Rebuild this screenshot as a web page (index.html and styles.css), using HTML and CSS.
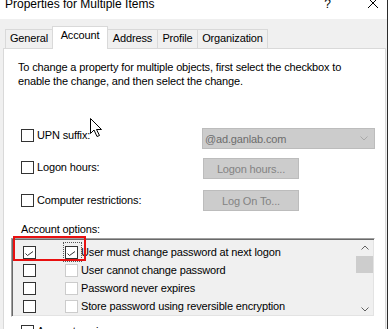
FILE: index.html
```html
<!DOCTYPE html>
<html>
<head>
<meta charset="utf-8">
<link rel="stylesheet" href="styles.css">
</head>
<body>
<div class="dialog">
  <div class="titlebar">
    <span class="title">Properties for Multiple Items</span>
    <span class="help">?</span>
    <svg class="close" viewBox="0 0 12 12"><path d="M1 1 L11 11 M11 1 L1 11" stroke="#000" stroke-width="1" fill="none"/></svg>
  </div>
  <div class="tabs">
    <div class="tab tab-general">General</div>
    <div class="tab tab-account active">Account</div>
    <div class="tab tab-address">Address</div>
    <div class="tab tab-profile">Profile</div>
    <div class="tab tab-org">Organization</div>
  </div>
  <div class="panel">
    <p class="intro">To change a property for multiple objects, first select the checkbox to enable the change, and then select the change.</p>
    <div class="fields">
      <div class="field field-upn">
        <div class="check"><span class="box"></span><span>UPN suffix:</span></div>
        <div class="combo"><span>@ad.ganlab.com</span><svg class="combo-arrow" viewBox="0 0 8 5"><polyline points="0.5,0.5 4,4 7.5,0.5" fill="none" stroke="#a8a8a8" stroke-width="1"/></svg></div>
      </div>
      <div class="field field-hours">
        <div class="check"><span class="box"></span><span>Logon hours:</span></div>
        <div class="button">Logon hours...</div>
      </div>
      <div class="field field-logon">
        <div class="check"><span class="box"></span><span>Computer restrictions:</span></div>
        <div class="button">Log On To...</div>
      </div>
    </div>
    <div class="group-label">Account options:</div>
    <div class="listbox">
      <div class="rows">
        <div class="row">
          <span class="box checked"><svg viewBox="0 0 11 11"><polyline points="1.5,6.5 3.5,8.5 9,4.5" fill="none" stroke="#333" stroke-width="1"/></svg></span>
          <span class="box inner checked focus"><svg viewBox="0 0 11 11"><polyline points="1.5,6.5 3.5,8.5 9,4.5" fill="none" stroke="#333" stroke-width="1"/></svg></span>
          <span class="row-label">User must change password at next logon</span>
        </div>
        <div class="row">
          <span class="box"></span>
          <span class="box inner disabled"></span>
          <span class="row-label">User cannot change password</span>
        </div>
        <div class="row">
          <span class="box"></span>
          <span class="box inner disabled"></span>
          <span class="row-label">Password never expires</span>
        </div>
        <div class="row">
          <span class="box"></span>
          <span class="box inner disabled"></span>
          <span class="row-label">Store password using reversible encryption</span>
        </div>
      </div>
      <div class="scrollbar">
        <div class="sb-btn"><svg viewBox="0 0 8 5"><polyline points="0.5,4.5 4,1 7.5,4.5" fill="none" stroke="#606060" stroke-width="1"/></svg></div>
        <div class="sb-thumb"></div>
        <div class="sb-track"></div>
        <div class="sb-btn sb-down"><svg viewBox="0 0 8 5"><polyline points="0.5,0.5 4,4 7.5,0.5" fill="none" stroke="#606060" stroke-width="1"/></svg></div>
      </div>
      <div class="annot"></div>
    </div>
    <div class="expires"><span class="box"></span><span>Account expires:</span></div>
  </div>
  <svg class="cursor" viewBox="0 0 13 20"><path d="M0.5 0.5 L0.5 15.5 L4 12 L7 18.5 L9.5 17.5 L6.5 11.5 L11.5 11.5 Z" fill="#fff" stroke="#000" stroke-width="1" stroke-linejoin="miter"/></svg>
</div>
</body>
</html>
```
FILE: styles.css
```css
* { box-sizing: border-box; }
html, body { margin: 0; padding: 0; }
body {
  background: #f0f0f0;
  font-family: "Liberation Sans", Arial, sans-serif;
  font-size: 11px;
  letter-spacing: -0.15px;
  color: #000;
}
.dialog {
  width: 388px;
  height: 329px;
  overflow: hidden;
  position: relative;
  border-right: 1px solid #2b2b2b;
  display: flex;
  flex-direction: column;
}
.titlebar {
  flex: none;
  height: 19px;
  background: #fff;
  display: flex;
  align-items: flex-start;
}
.title {
  font-size: 12px;
  letter-spacing: 0;
  line-height: 12px;
  margin: -2px 0 0 5px;
}
.help {
  font-size: 12px;
  letter-spacing: 0;
  line-height: 12px;
  margin: -2px 0 0 auto;
}
.close {
  width: 12px;
  height: 12px;
  margin: -3px 8px 0 36px;
}
.tabs {
  flex: none;
  height: 29px;
  display: flex;
  align-items: flex-end;
  padding-left: 5px;
}
.tab {
  height: 19px;
  border: 1px solid #d9d9d9;
  border-bottom: none;
  line-height: 17px;
  text-align: center;
  background: #f0f0f0;
  white-space: nowrap;
}
.tab + .tab { margin-left: -1px; }
.tab.active {
  height: 23px;
  margin-bottom: -1px;
  padding-bottom: 5px;
  background: #fff;
  position: relative;
  z-index: 1;
}
.tab-general { width: 48px; }
.tab-account { width: 56px; }
.tab-address { width: 51px; }
.tab-profile { width: 41px; }
.tab-org { width: 71px; }
.panel {
  flex: none;
  height: 300px;
  margin: 0 1px 0 3px;
  border: 1px solid #d9d9d9;
  background: #fff;
}
.intro {
  margin: 11px 0 0 14px;
  width: 350px;
  line-height: 14px;
}
.fields {
  margin-top: 40px;
  padding-left: 17px;
  display: flex;
  flex-direction: column;
}
.field {
  display: flex;
  align-items: flex-start;
}
.check {
  width: 181px;
  display: flex;
  align-items: center;
  gap: 3px;
  line-height: 13px;
}
.field-upn .check { margin-top: 1px; }
.field-hours { margin-top: 9px; }
.field-hours .check { margin-top: 3px; }
.field-logon { margin-top: 11px; }
.field-logon .check { margin-top: 4px; }
.box {
  flex: none;
  width: 13px;
  height: 13px;
  border: 1px solid #333;
  background: #fff;
  display: block;
}
.box svg { display: block; width: 11px; height: 11px; }
.box.disabled { border-color: #cccccc; }
.combo {
  width: 173px;
  height: 21px;
  border: 1px solid #bcbcbc;
  background: #cccccc;
  color: #6d6d6d;
  display: flex;
  align-items: center;
  justify-content: space-between;
  padding: 0 6px 0 2px;
}
.combo-arrow { width: 8px; height: 5px; }
.button {
  margin-left: 1px;
  width: 96px;
  height: 21px;
  border: 1px solid #bcbcbc;
  background: #cccccc;
  color: #838383;
  display: flex;
  align-items: center;
  justify-content: center;
}
.group-label {
  margin: 11px 0 0 17px;
  line-height: 14px;
}
.listbox {
  position: relative;
  margin: 2px 0 0 7px;
  width: 364px;
  height: 79px;
  display: flex;
  background: #f0f0f0;
  border-top: 1px solid #a0a0a0;
  border-left: 1px solid #a0a0a0;
  border-right: 1px solid #ffffff;
  border-bottom: 1px solid #ffffff;
  box-shadow: inset 1px 1px 0 #696969, inset -1px -1px 0 #e3e3e3;
}
.rows {
  flex: 1;
  padding: 4px 0 0 11px;
}
.row {
  height: 18px;
  display: flex;
  align-items: center;
}
.box.inner { margin-left: 29px; }
.row-label { margin-left: 3px; white-space: nowrap; }
.focus { position: relative; }
.focus::after {
  content: "";
  position: absolute;
  left: -3px;
  top: -5px;
  width: 17px;
  height: 18px;
  border: 1px dotted #555;
}
.scrollbar {
  width: 17px;
  display: flex;
  flex-direction: column;
  margin-right: 1px;
}
.sb-btn {
  height: 17px;
  display: flex;
  align-items: center;
  justify-content: center;
}
.sb-btn svg { width: 8px; height: 5px; }
.sb-down { padding-top: 4px; }
.sb-thumb { height: 17px; background: #cdcdcd; }
.sb-track { flex: 1; }
.annot {
  position: absolute;
  left: 1px;
  top: -3px;
  width: 73px;
  height: 25px;
  border: 2px solid #e81010;
}
.expires {
  margin: 8px 0 0 17px;
  display: flex;
  align-items: center;
  gap: 3px;
  line-height: 13px;
}
.cursor {
  position: absolute;
  left: 90px;
  top: 118px;
  width: 13px;
  height: 20px;
}
```
